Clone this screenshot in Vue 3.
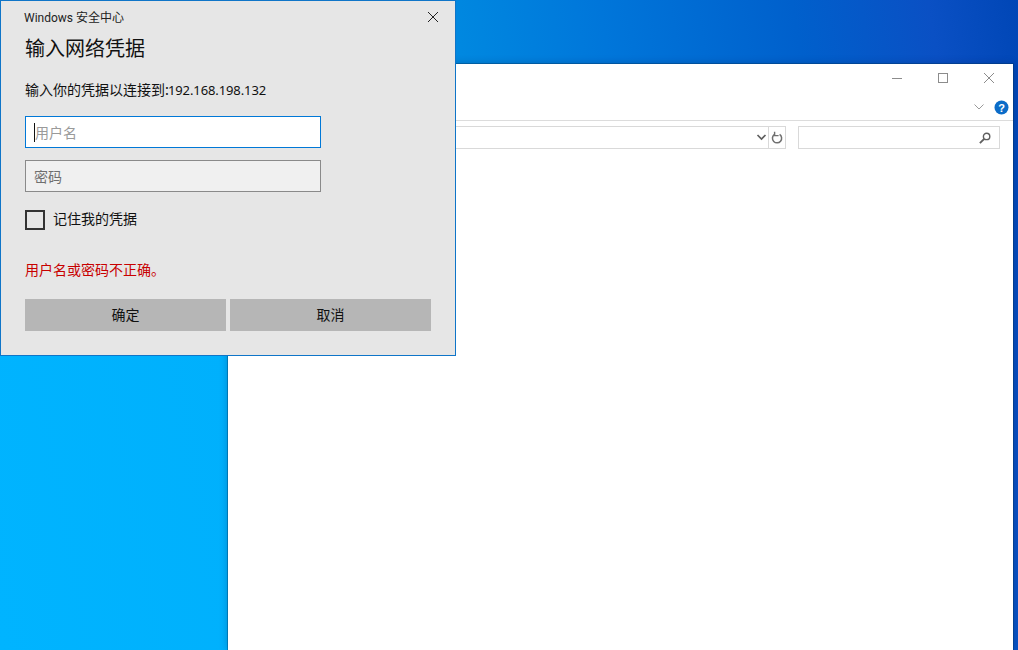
<script setup>
</script>

<template>
  <div class="desktop">
    <section class="explorer">
      <div class="caption">
        <svg class="cap-icon" width="12" height="12" viewBox="0 0 12 12"><path d="M1 6.5h10" stroke="#8c8c8c" fill="none"/></svg>
        <svg class="cap-icon" width="12" height="12" viewBox="0 0 12 12"><rect x="1.5" y="1.5" width="9" height="9" stroke="#8c8c8c" fill="none"/></svg>
        <svg class="cap-icon" width="12" height="12" viewBox="0 0 12 12"><path d="M1 1l10 10M11 1L1 11" stroke="#8c8c8c" fill="none"/></svg>
      </div>
      <div class="ribbon">
        <svg width="12" height="8" viewBox="0 0 12 8"><path d="M1.5 1.5L6 6l4.5-4.5" stroke="#9a9a9a" fill="none"/></svg>
        <svg width="15" height="15" viewBox="0 0 15 15">
          <circle cx="7.5" cy="7.5" r="7" fill="#0b6cc8"/>
          <text x="7.5" y="11.5" text-anchor="middle" class="help">?</text>
        </svg>
      </div>
      <div class="toolbar">
        <div class="address">
          <svg class="drop" width="11" height="7" viewBox="0 0 11 7"><path d="M1.5 1l4 4 4-4" stroke="#5f5f5f" stroke-width="1.7" fill="none"/></svg>
          <div class="refresh">
            <svg width="12" height="13" viewBox="0 0 12 13"><path d="M3.2 3.6a4.6 4.6 0 1 0 5.4-.2" stroke="#707070" stroke-width="1.5" fill="none"/><path d="M3.6 .8v3.8h4" stroke="#707070" stroke-width="1.4" fill="none"/></svg>
          </div>
        </div>
        <div class="search">
          <svg width="12" height="12" viewBox="0 0 12 12"><circle cx="7.6" cy="4.4" r="3.2" stroke="#5f5f5f" stroke-width="1.4" fill="none"/><path d="M5.2 6.8L.9 11.1" stroke="#5f5f5f" stroke-width="1.9"/></svg>
        </div>
      </div>
    </section>

    <section class="dialog">
      <header class="title-row">
        <span class="app-name">Windows 安全中心</span>
        <svg class="close" width="12" height="12" viewBox="0 0 12 12"><path d="M1 1l10 10M11 1L1 11" stroke="#222" fill="none"/></svg>
      </header>
      <h1>输入网络凭据</h1>
      <p class="prompt">输入你的凭据以连接到:<span class="ip">192.168.198.132</span></p>
      <div class="field focus"><i class="caret"></i><span>用户名</span></div>
      <div class="field idle"><span>密码</span></div>
      <div class="remember"><i class="box"></i><span class="remember-label">记住我的凭据</span></div>
      <p class="error">用户名或密码不正确。</p>
      <div class="buttons">
        <div class="btn">确定</div>
        <div class="btn">取消</div>
      </div>
    </section>
  </div>
</template>

<style>
html, body { margin: 0; padding: 0; overflow: hidden; }
</style>

<style scoped>
.desktop {
  position: relative;
  width: 1018px;
  height: 650px;
  overflow: hidden;
  background: linear-gradient(80deg, #00b4ff 0%, #00b0fc 25%, #0088e0 50%, #0076da 63%, #0060cc 80%, #0a50c4 92%, #0046b6 100%);
  font-family: "Noto Sans CJK SC", "Liberation Sans", sans-serif;
}
.explorer {
  position: absolute;
  left: 228px;
  top: 64px;
  width: 785px;
  height: 586px;
  background: #fff;
  box-shadow: 0 0 0 1px rgba(0, 50, 90, .35), 0 0 8px rgba(0, 30, 80, .3);
  display: flex;
  flex-direction: column;
}
.caption {
  display: flex;
  justify-content: flex-end;
  align-items: center;
  gap: 34px;
  height: 28px;
  padding-right: 18px;
}
.cap-icon { display: block; }
.ribbon {
  display: flex;
  justify-content: flex-end;
  align-items: center;
  gap: 9px;
  height: 26px;
  padding: 2px 4px 0 0;
  border-bottom: 1px solid #dcdcdc;
}
.help {
  font: bold 11px "Liberation Sans", sans-serif;
  fill: #fff;
}
.toolbar {
  display: flex;
  gap: 12px;
  padding: 5px 13px 0 0;
}
.address {
  flex: 1;
  height: 21px;
  border: 1px solid #d9d9d9;
  border-left: 0;
  display: flex;
  justify-content: flex-end;
  align-items: center;
}
.drop { margin-right: 1px; }
.refresh {
  box-sizing: border-box;
  width: 17px;
  height: 21px;
  border-left: 1px solid #d9d9d9;
  display: flex;
  align-items: center;
  justify-content: center;
}
.search {
  box-sizing: border-box;
  width: 202px;
  height: 23px;
  border: 1px solid #d9d9d9;
  display: flex;
  justify-content: flex-end;
  align-items: center;
  padding-right: 8px;
}
.dialog {
  position: absolute;
  left: 0;
  top: 0;
  width: 456px;
  height: 356px;
  box-sizing: border-box;
  background: #e6e6e6;
  border: 1px solid #0f75c8;
  padding: 0 24px;
  color: #111;
}
.title-row {
  display: flex;
  justify-content: space-between;
  align-items: center;
  height: 30px;
  margin-right: -8px;
  font-size: 12px;
  color: #222;
}
.app-name {
  margin-left: -1px;
  font-family: Roboto, "Noto Sans CJK SC", sans-serif;
}
.close { margin-top: 2px; }
h1 {
  margin: 0;
  height: 34px;
  line-height: 34px;
  font-size: 20px;
  font-weight: 400;
  color: #111;
}
.prompt {
  margin: 15px 0 0;
  height: 20px;
  line-height: 18px;
  font-size: 14px;
  color: #111;
}
.ip {
  font-family: "Noto Sans", sans-serif;
  font-size: 13px;
  letter-spacing: -.1px;
  margin-left: -1px;
}
.field {
  box-sizing: border-box;
  width: 296px;
  height: 32px;
  display: flex;
  align-items: center;
  padding-left: 8px;
  font-size: 14px;
  color: #8a8a8a;
}
.focus {
  margin-top: 16px;
  background: #fff;
  border: 1px solid #0078d7;
  color: #9a9a9a;
}
.caret {
  width: 1px;
  height: 19px;
  background: #111;
}
.idle {
  margin-top: 12px;
  background: #f0f0f0;
  border: 1px solid #8a8a8a;
  color: #6f6f6f;
}
.remember {
  display: flex;
  align-items: center;
  gap: 8px;
  margin-top: 18px;
  height: 20px;
  font-size: 14px;
  color: #111;
}
.remember-label { padding-bottom: 4px; }
.box {
  box-sizing: border-box;
  width: 20px;
  height: 20px;
  border: 2px solid #333;
}
.error {
  margin: 30px 0 0;
  height: 20px;
  line-height: 18px;
  font-size: 14px;
  color: #c80000;
}
.buttons {
  display: flex;
  gap: 4px;
  margin-top: 19px;
  width: 406px;
}
.btn {
  flex: 1;
  box-sizing: border-box;
  height: 32px;
  padding-bottom: 2px;
  background: #b6b6b6;
  display: flex;
  align-items: center;
  justify-content: center;
  font-size: 14px;
  color: #111;
}
</style>
